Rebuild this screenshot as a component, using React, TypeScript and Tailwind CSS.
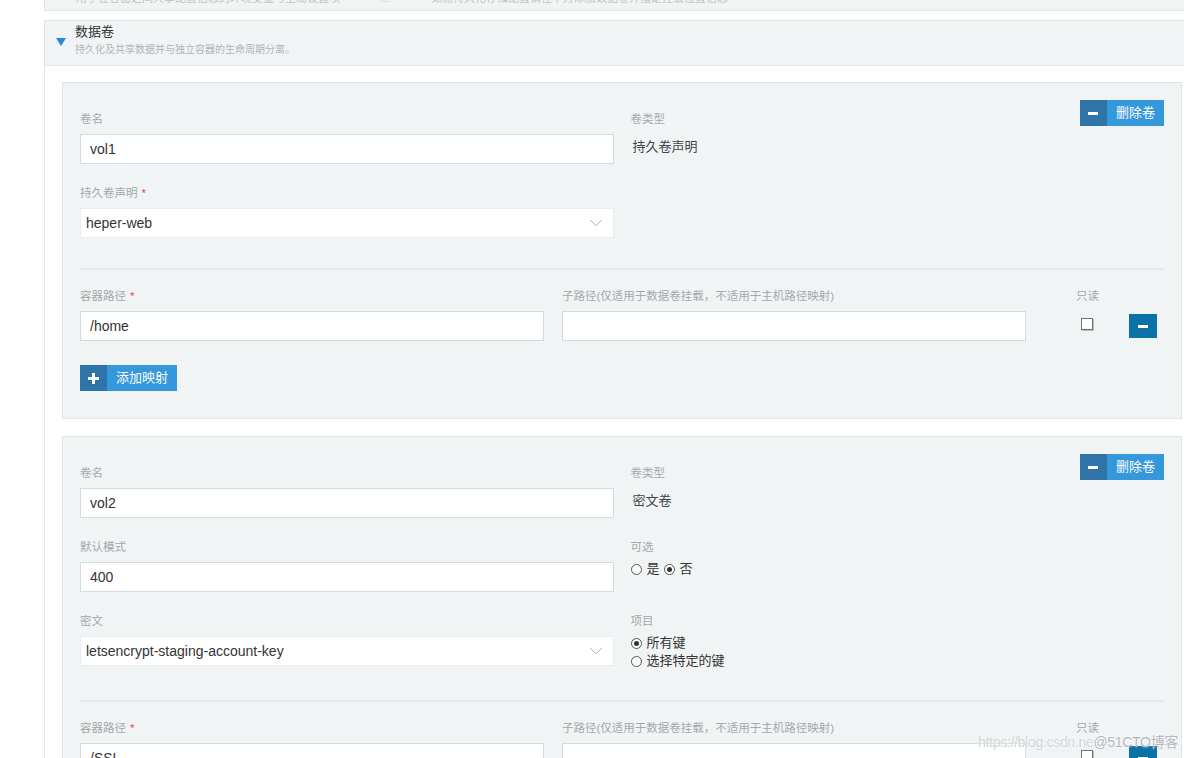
import { ChevronDown } from 'lucide-react'
import type { ReactNode } from 'react'

const font = "font-['Liberation_Sans','Noto_Sans_CJK_SC',sans-serif]"

function Label({ children, req, tight }: { children: ReactNode; req?: boolean; tight?: boolean }) {
  return (
    <div className={`text-[11.5px] leading-[18px] text-[#a3a8ab] ${tight ? 'mb-[4px]' : 'mb-[6px]'}`}>
      {children}
      {req && <span className="ml-[4px] text-[#e5484d]">*</span>}
    </div>
  )
}

function TextInput({ value }: { value: string }) {
  return (
    <input
      readOnly
      defaultValue={value}
      className="block h-[30px] w-full border border-[#d3dbdf] bg-white pl-[9px] text-[14px] text-[#333] outline-none"
    />
  )
}

function Select({ value }: { value: string }) {
  return (
    <div className="flex h-[30px] items-center justify-between border border-[#e9edef] bg-white pl-[5px] pr-[6px] text-[14px] text-[#333]">
      <span>{value}</span>
      <ChevronDown size={22} strokeWidth={0.9} className="text-[#9aa0a4]" />
    </div>
  )
}

function Radio({ checked, children }: { checked?: boolean; children: ReactNode }) {
  return (
    <span className="inline-flex items-center gap-[5px] text-[13px] leading-[18px] text-[#333]">
      <span className="flex h-[11px] w-[11px] items-center justify-center rounded-full border border-[#555] bg-white">
        {checked && <span className="h-[5px] w-[5px] rounded-full bg-[#333]" />}
      </span>
      {children}
    </span>
  )
}

function SplitButton({ icon, text }: { icon: 'plus' | 'minus'; text: string }) {
  return (
    <button type="button" className="flex h-[26px] items-stretch text-[13px] text-white">
      <span className="flex w-[27px] items-center justify-center bg-[#2f74a9]">
        {icon === 'minus' ? (
          <span className="h-[3px] w-[10px] bg-white" />
        ) : (
          <svg width="11" height="11" viewBox="0 0 11 11" fill="white">
            <rect x="4" y="0" width="3" height="11" />
            <rect x="0" y="4" width="11" height="3" />
          </svg>
        )}
      </span>
      <span className="flex items-center bg-[#3498db] pl-[9px] pr-[9px]">{text}</span>
    </button>
  )
}

function MountRow({ path }: { path: string }) {
  return (
    <div className="mt-[17px] flex items-start">
      <div className="w-[464px]">
        <Label req>容器路径</Label>
        <TextInput value={path} />
      </div>
      <div className="ml-[18px] w-[464px]">
        <Label>子路径(仅适用于数据卷挂载，不适用于主机路径映射)</Label>
        <TextInput value="" />
      </div>
      <div className="ml-[50px] w-[53px]">
        <Label>只读</Label>
        <div className="pl-[5px] pt-[7px]">
          <div className="h-[12px] w-[12px] border border-[#707070] bg-white shadow-[1px_1px_0_#bbb]" />
        </div>
      </div>
      <button type="button" className="mt-[27px] flex h-[24px] w-[28px] items-center justify-center bg-[#0b72a7]">
        <span className="h-[3px] w-[10px] bg-white" />
      </button>
    </div>
  )
}

function Divider() {
  return <div className="mt-[30px] h-[2px] bg-[#e2e7e9]" />
}

function Card({ children }: { children: ReactNode }) {
  return <div className="border border-[#dfe5e7] bg-[#f1f4f5] px-[17px] pt-[27px] pb-[27px]">{children}</div>
}

function TypeHead({ type }: { type: string }) {
  return (
    <div className="flex items-start justify-between">
      <div>
        <Label>卷类型</Label>
        <div className="pt-[3px] pl-[2px] text-[13px] leading-[20px] text-[#444]">{type}</div>
      </div>
      <div className="-mt-[10px]">
        <SplitButton icon="minus" text="删除卷" />
      </div>
    </div>
  )
}

export default function App() {
  return (
    <div className={`relative min-h-screen bg-white ${font}`}>
      <div className="pl-[44px]">
        {/* previous section, mostly scrolled out */}
        <div className="h-[11px] overflow-hidden border-b border-l border-[#e1e6e7] bg-[#f1f4f5]">
          <div className="-mt-[9px] flex pl-[31px] text-[11px] leading-[14px] text-[#c0c4c7]">
            <span>用于在容器之间共享配置信息的环境变量与全局设置项</span>
            <span className="ml-[40px]">…</span>
            <span className="ml-[40px]">如需持久化存储配置请在下方添加数据卷并指定挂载位置信息</span>
          </div>
        </div>

        <div className="mt-[9px] flex h-[46px] border border-r-0 border-[#e1e6e7] bg-[#f1f4f5] pl-[11px]">
          <div className="mt-[17px] h-0 w-0 border-l-[5px] border-r-[5px] border-t-[8px] border-l-transparent border-r-transparent border-t-[#2a8bd9]" />
          <div className="ml-[9px] pt-[2px]">
            <div className="text-[13px] leading-[18px] text-[#333]">数据卷</div>
            <div className="mt-[2px] text-[10px] leading-[14px] text-[#b0b5b8]">持久化及共享数据并与独立容器的生命周期分离。</div>
          </div>
        </div>

        <div className="flex flex-col gap-[17px] border-l border-[#e1e6e7] pl-[17px] pr-[2px] pt-[16px] pb-[20px]">
          <Card>
            <div className="flex flex-col gap-[20px]">
              <div className="grid grid-cols-2 gap-x-[17px]">
                <div>
                  <Label>卷名</Label>
                  <TextInput value="vol1" />
                </div>
                <TypeHead type="持久卷声明" />
              </div>
              <div className="grid grid-cols-2 gap-x-[17px]">
                <div>
                  <Label req>持久卷声明</Label>
                  <Select value="heper-web" />
                </div>
                <div />
              </div>
            </div>
            <Divider />
            <MountRow path="/home" />
            <div className="mt-[24px] flex">
              <SplitButton icon="plus" text="添加映射" />
            </div>
          </Card>

          <Card>
            <div className="flex flex-col gap-[20px]">
              <div className="grid grid-cols-2 gap-x-[17px]">
                <div>
                  <Label>卷名</Label>
                  <TextInput value="vol2" />
                </div>
                <TypeHead type="密文卷" />
              </div>
              <div className="grid grid-cols-2 gap-x-[17px]">
                <div>
                  <Label>默认模式</Label>
                  <TextInput value="400" />
                </div>
                <div>
                  <Label tight>可选</Label>
                  <div className="flex gap-[4px]">
                    <Radio>是</Radio>
                    <Radio checked>否</Radio>
                  </div>
                </div>
              </div>
              <div className="grid grid-cols-2 gap-x-[17px]">
                <div>
                  <Label>密文</Label>
                  <Select value="letsencrypt-staging-account-key" />
                </div>
                <div>
                  <Label tight>项目</Label>
                  <div className="flex flex-col">
                    <Radio checked>所有键</Radio>
                    <Radio>选择特定的键</Radio>
                  </div>
                </div>
              </div>
            </div>
            <Divider />
            <MountRow path="/SSL" />
            <div className="mt-[24px] flex">
              <SplitButton icon="plus" text="添加映射" />
            </div>
          </Card>
        </div>
      </div>

      {/* watermark */}
      <div className="absolute left-[978px] top-[733px] whitespace-nowrap text-[14px] leading-[18px] tracking-[-0.3px] [text-shadow:0_0_2px_#fff]">
        <span className="text-[#d2d6d9]">https://blog.csdn.ne</span>
        <span className="text-[#b5b9bc]">@51CTO博客</span>
      </div>
    </div>
  )
}
